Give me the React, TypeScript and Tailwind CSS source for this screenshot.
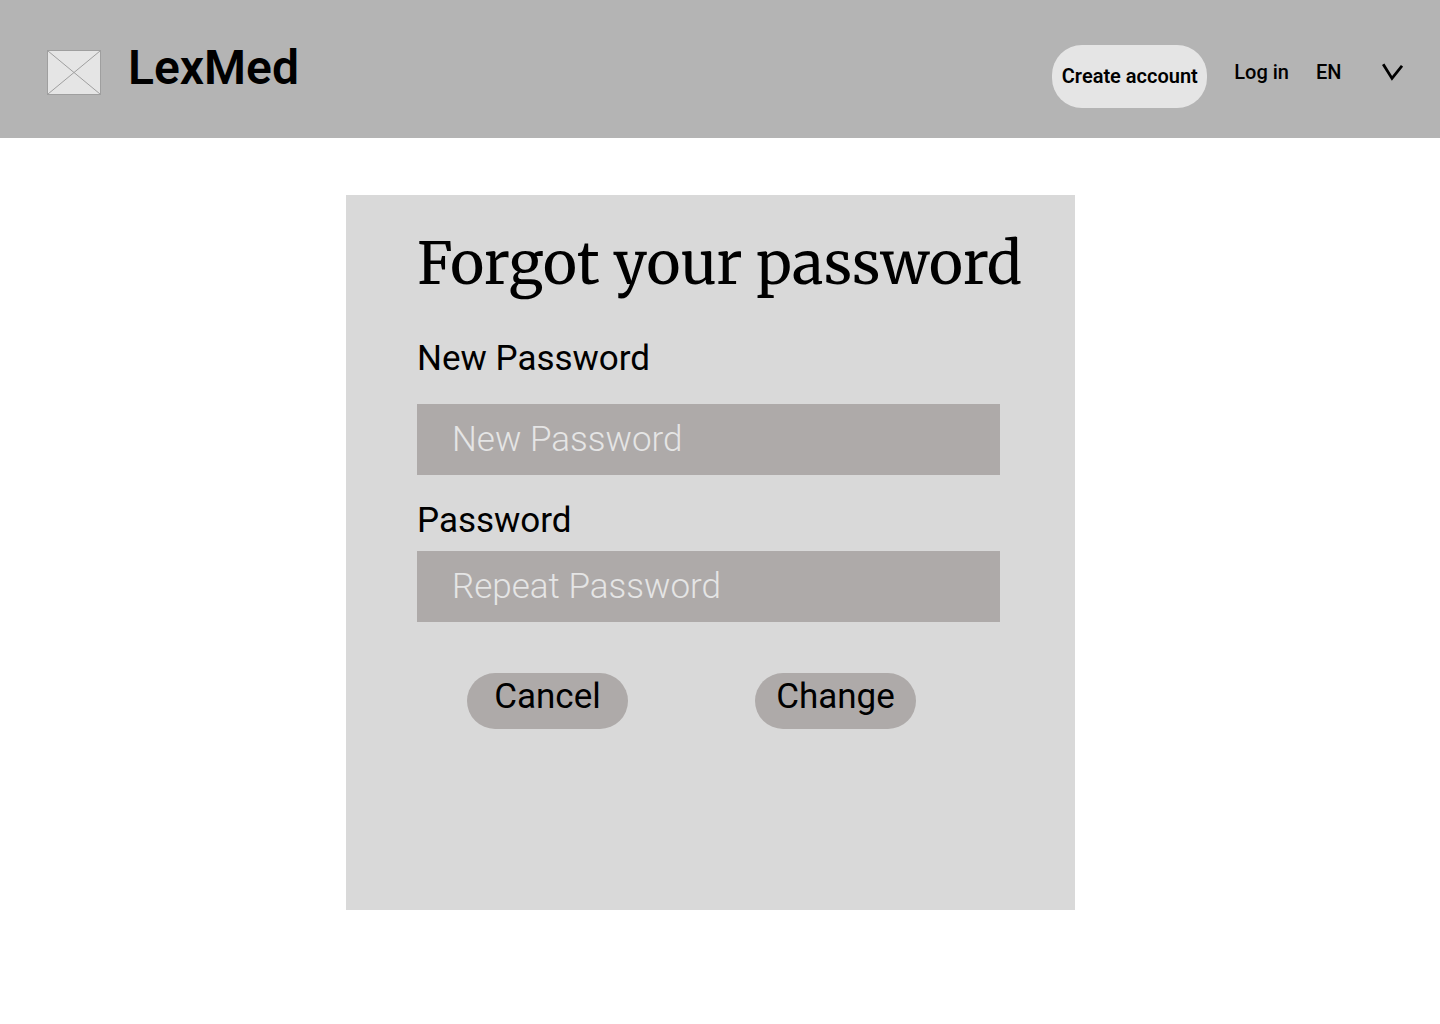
import React from "react";

function Logo() {
  return (
    <svg
      className="mt-[5px] h-[45px] w-[54px] shrink-0"
      viewBox="0 0 54 45"
      fill="none"
      stroke="#9f9f9f"
      aria-hidden="true"
    >
      <rect x="0.5" y="0.5" width="53" height="44" fill="#e5e5e5" />
      <path d="M1 1l52 43M53 1L1 44" />
    </svg>
  );
}

function Header() {
  return (
    <header className="flex items-start justify-between bg-[#b4b4b4] pt-[45px] pr-[37px] pb-[30px] pl-[47px]">
      <div className="flex items-start gap-[27px]">
        <Logo />
        <span className="text-5xl leading-[45px] font-semibold">LexMed</span>
      </div>
      <nav className="flex items-start text-xl leading-[54px] font-medium">
        <button
          type="button"
          className="h-[63px] w-[155px] rounded-[30px] bg-[#e5e5e5] text-center leading-[63px] font-semibold whitespace-nowrap"
        >
          Create account
        </button>
        <a href="#login" className="ml-[27px]">
          Log in
        </a>
        <div className="relative ml-[27px]">
          <select
            aria-label="Language"
            className="block h-[54px] w-[87px] appearance-none bg-transparent leading-[54px]"
            defaultValue="EN"
          >
            <option>EN</option>
            <option>RO</option>
          </select>
          <svg
            className="pointer-events-none absolute top-[18px] right-0 h-[18px] w-[21px]"
            viewBox="0 0 21 18"
            fill="none"
            stroke="#000"
            strokeWidth="2.8"
            aria-hidden="true"
          >
            <path d="M1.2 1.2L10 15.4L20 2.8" />
          </svg>
        </div>
      </nav>
    </header>
  );
}

const inputClass =
  "block h-[71px] w-full bg-[#aeaaa9] px-[35px] text-[35px] font-light text-[#e5e5e5] outline-none placeholder:text-[#e5e5e5] placeholder:opacity-100";
const labelClass = "block text-[35px] leading-[42px]";
const buttonClass =
  "h-[56px] w-[161px] rounded-full bg-[#aeaaa9] pb-[9px] text-center text-[35px] leading-[47px]";

export default function App() {
  return (
    <div className="min-h-screen bg-white font-['Roboto',sans-serif] text-black">
      <Header />
      <main className="pt-[57px] pr-[19px]">
        <form
          className="mx-auto max-w-[729px] bg-[#d9d9d9] pt-[33px] pr-[75px] pb-[181px] pl-[71px]"
          onSubmit={(e) => e.preventDefault()}
        >
          <h1 className="font-['Merriweather','DejaVu_Serif',serif] text-[58px] leading-[72px] whitespace-nowrap">
            Forgot your password
          </h1>
          <label htmlFor="new-password" className={labelClass + " mt-[38px]"}>
            New Password
          </label>
          <input
            id="new-password"
            type="password"
            placeholder="New Password"
            className={inputClass + " mt-6"}
          />
          <label htmlFor="repeat-password" className={labelClass + " mt-[25px]"}>
            Password
          </label>
          <input
            id="repeat-password"
            type="password"
            placeholder="Repeat Password"
            className={inputClass + " mt-[9px]"}
          />
          <div className="mt-[51px] flex gap-[127px] pl-[50px]">
            <button type="button" className={buttonClass}>
              Cancel
            </button>
            <button type="submit" className={buttonClass}>
              Change
            </button>
          </div>
        </form>
      </main>
    </div>
  );
}
